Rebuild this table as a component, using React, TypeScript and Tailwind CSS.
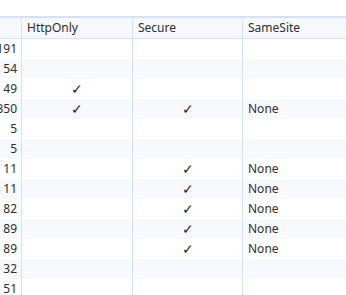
const rows: { n: string; http?: boolean; secure?: boolean; site?: string }[] = [
  { n: '191' },
  { n: '54' },
  { n: '49', http: true },
  { n: '350', http: true, secure: true, site: 'None' },
  { n: '5' },
  { n: '5' },
  { n: '11', secure: true, site: 'None' },
  { n: '11', secure: true, site: 'None' },
  { n: '82', secure: true, site: 'None' },
  { n: '89', secure: true, site: 'None' },
  { n: '89', secure: true, site: 'None' },
  { n: '32' },
  { n: '51' },
];

const Check = () => <span className="text-[14px] leading-none text-[#1f2333]">✓</span>;

export default function App() {
  return (
    <div className="h-[295px] overflow-hidden bg-white pt-4 text-[12px] text-[#2e2e2e]" style={{ fontFamily: '"Noto Sans", "Open Sans", sans-serif' }}>
      <div className="flex h-[23px] border-t-2 border-b border-[#d3e2f8] bg-[#f6f8fc]">
        <div className="w-[22px] shrink-0 border-r border-[#d3e2f8]" />
        <div className="flex w-[111px] shrink-0 items-center border-r border-[#d3e2f8] pl-[5px]">HttpOnly</div>
        <div className="flex w-[110px] shrink-0 items-center border-r border-[#d3e2f8] pl-[5px]">Secure</div>
        <div className="flex flex-1 items-center pl-[5px]">SameSite</div>
      </div>
      {rows.map((r, i) => (
        <div key={i} className={`flex h-5 ${i % 2 === 1 ? 'bg-[#f7f9fd]' : 'bg-white'}`}>
          <div className="flex w-[22px] shrink-0 items-center justify-end overflow-hidden border-r border-[#d3e2f8] pr-[4px] whitespace-nowrap">{r.n}</div>
          <div className="flex w-[111px] shrink-0 items-center justify-center border-r border-[#d3e2f8]">{r.http && <Check />}</div>
          <div className="flex w-[110px] shrink-0 items-center justify-center border-r border-[#d3e2f8]">{r.secure && <Check />}</div>
          <div className="flex flex-1 items-center pl-[5px]">{r.site}</div>
        </div>
      ))}
    </div>
  );
}
